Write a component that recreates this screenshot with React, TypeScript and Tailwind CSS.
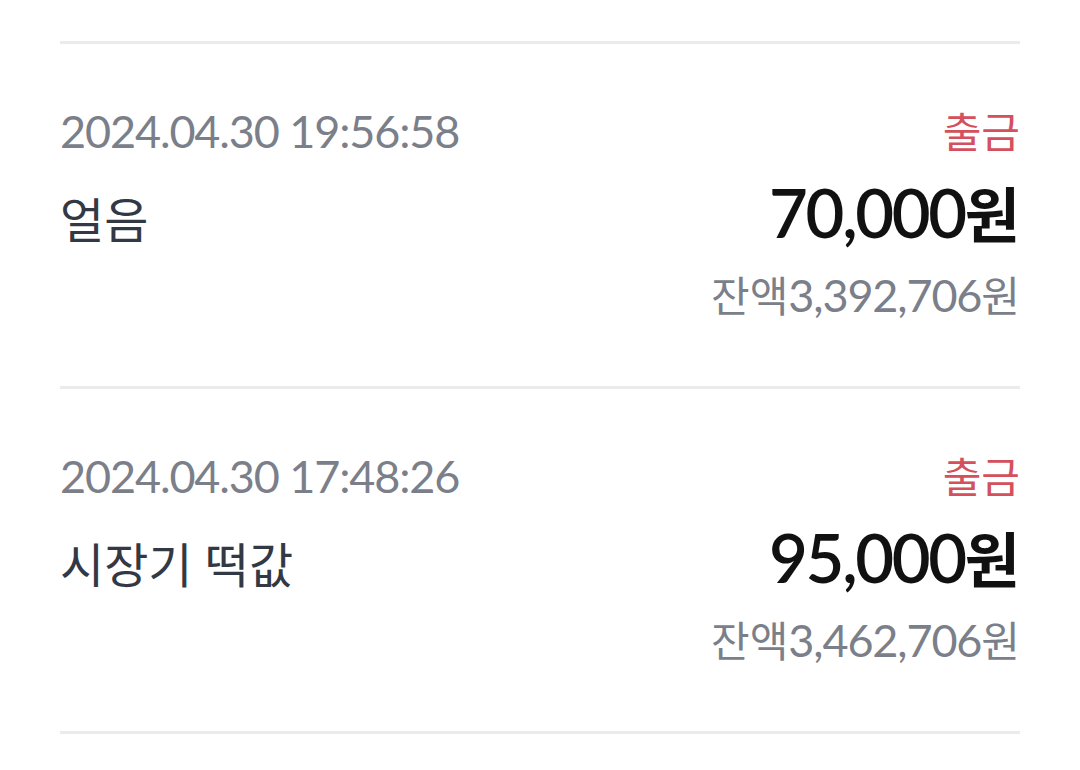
import React from 'react';

interface Tx {
  id: number;
  datetime: string;
  kind: string;
  memo: string;
  amount: string;
  balance: string;
}

const txs: Tx[] = [
  { id: 1, datetime: '2024.04.30 19:56:58', kind: '출금', memo: '얼음', amount: '70,000', balance: '3,392,706' },
  { id: 2, datetime: '2024.04.30 17:48:26', kind: '출금', memo: '시장기 떡값', amount: '95,000', balance: '3,462,706' },
];

const font = { fontFamily: 'Lato, "Noto Sans CJK KR", sans-serif' };

export default function App() {
  return (
    <div className="w-[1080px] h-[770px] bg-white overflow-hidden" style={font}>
      <div className="px-[60px] pt-[41px]">
        <div className="h-[3px] bg-[#ebebeb]" />
        {txs.map((tx) => (
          <div key={tx.id}>
            <div className="pt-[60px] pb-[64px]">
              {/* date + type */}
              <div className="flex justify-between items-baseline h-[54px]">
                <span className="text-[45px] leading-[54px] tracking-[-0.025em] text-[#7b7f8a]">{tx.datetime}</span>
                <span className="text-[42px] leading-[54px] text-[#d4505c]">{tx.kind}</span>
              </div>
              {/* memo + amount */}
              <div className="flex justify-between items-baseline h-[80px] mt-[13px]">
                <span className="text-[48px] leading-[48px] text-[#333944]">{tx.memo}</span>
                <span className="text-[67px] leading-[82px] font-semibold tracking-[-0.035em] text-[#111111]">
                  {tx.amount}
                  <span className="text-[60px] tracking-normal">원</span>
                </span>
              </div>
              {/* balance */}
              <div className="flex justify-end h-[54px] mt-[17px]">
                <span className="text-[45px] leading-[54px] tracking-[-0.025em] text-[#7b7f8a]">
                  <span className="text-[42px] tracking-normal">잔액</span>
                  {tx.balance}
                  <span className="text-[42px] tracking-normal">원</span>
                </span>
              </div>
            </div>
            <div className="h-[3px] bg-[#ebebeb]" />
          </div>
        ))}
      </div>
    </div>
  );
}
